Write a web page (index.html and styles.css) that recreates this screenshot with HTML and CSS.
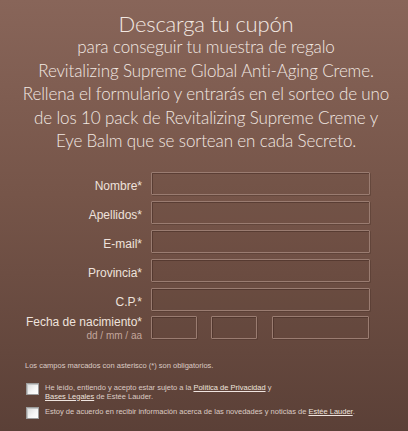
FILE: index.html
```html
<!DOCTYPE html>
<html lang="es">
<head>
<meta charset="utf-8">
<link rel="stylesheet" href="styles.css">
</head>
<body>
<div class="page">
  <div class="intro">
    <h1 class="title">Descarga tu cupón</h1>
    <p class="lead">para conseguir tu muestra de regalo<br>Revitalizing Supreme Global Anti-Aging Creme.<br>Rellena el formulario y entrarás en el sorteo de uno<br>de los 10 pack de Revitalizing Supreme Creme y<br>Eye Balm que se sortean en cada Secreto.</p>
  </div>
  <form class="form">
    <div class="row"><label class="label">Nombre*</label><input class="field" type="text"></div>
    <div class="row"><label class="label">Apellidos*</label><input class="field" type="text"></div>
    <div class="row"><label class="label">E-mail*</label><input class="field" type="text"></div>
    <div class="row"><label class="label">Provincia*</label><input class="field" type="text"></div>
    <div class="row"><label class="label">C.P.*</label><input class="field" type="text"></div>
    <div class="row date-row">
      <label class="label label-date">Fecha de nacimiento*<span class="hint">dd / mm / aa</span></label>
      <div class="date-fields">
        <input class="field dd" type="text">
        <input class="field mm" type="text">
        <input class="field aa" type="text">
      </div>
    </div>
  </form>
  <div class="legal">
    <p class="note">Los campos marcados con asterisco (*) son obligatorios.</p>
    <div class="check">
      <span class="box"></span>
      <p class="check-text">He leído, entiendo y acepto estar sujeto a la <a href="#">Política de Privacidad</a> y<br><a href="#">Bases Legales</a> de Estée Lauder.</p>
    </div>
    <div class="check">
      <span class="box"></span>
      <p class="check-text">Estoy de acuerdo en recibir información acerca de las novedades y noticias de <a href="#">Estée Lauder</a>.</p>
    </div>
  </div>
</div>
</body>
</html>
```

FILE: styles.css
```css
html, body {
  margin: 0;
  padding: 0;
}
body {
  width: 408px;
  height: 431px;
  overflow: hidden;
  background: linear-gradient(180deg, #886559 0%, #765549 45%, #5b4037 100%);
  font-family: "Liberation Sans", Arial, sans-serif;
}
.page {
  width: 408px;
}
.intro {
  text-align: center;
  color: #f2e8e2;
  font-family: "Lato", "Open Sans", sans-serif;
  padding-top: 13px;
  padding-left: 4px;
}
.title {
  margin: 0;
  font-weight: 300;
  font-size: 22px;
  line-height: 22px;
  letter-spacing: -0.2px;
}
.lead {
  margin: 0;
  font-size: 17px;
  line-height: 23.5px;
  font-weight: 300;
  letter-spacing: -0.13px;
}
.form {
  margin-top: 19px;
  display: flex;
  flex-direction: column;
  gap: 6px;
}
.row {
  display: grid;
  grid-template-columns: 142px 219px;
  column-gap: 9px;
  align-items: end;
}
.label {
  text-align: right;
  color: #eee2dc;
  font-size: 12px;
  line-height: 14px;
  padding-bottom: 2px;
}
.field {
  box-sizing: border-box;
  height: 23px;
  margin: 0;
  padding: 0 4px;
  background: rgba(90, 60, 50, 0.08);
  border: 1px solid #9a7c71;
  box-shadow: inset 1px 1px 0 rgba(60, 35, 28, 0.45), 1px 1px 0 rgba(70, 45, 38, 0.35);
  border-radius: 1px;
  outline: none;
  width: 100%;
}
.date-row {
  align-items: start;
  margin-top: -1px;
}
.label-date {
  display: flex;
  flex-direction: column;
  padding-top: 0;
  padding-bottom: 0;
  line-height: 13px;
}
.hint {
  font-size: 10px;
  color: #c2a69c;
  line-height: 13px;
}
.date-fields {
  display: flex;
}
.dd, .mm {
  width: 46px;
}
.dd {
  margin-right: 14px;
}
.mm {
  margin-right: 15px;
}
.aa {
  width: 97px;
}
.legal {
  padding-left: 25px;
  color: #dccbc4;
  font-size: 7.5px;
}
.note {
  margin: 19px 0 0;
  line-height: 10px;
}
.check {
  display: flex;
  align-items: flex-start;
  gap: 6px;
  margin-top: 12px;
}
.check + .check {
  margin-top: 6px;
}
.box {
  flex: none;
  box-sizing: border-box;
  width: 13px;
  height: 12px;
  margin-left: 1px;
  border: 1px solid #9c9c9c;
  background: linear-gradient(135deg, #d8dada 0%, #f6f6f6 60%, #ffffff 100%);
  box-shadow: inset 1px 1px 0 #c4c6c6;
}
.check-text {
  margin: 0;
  line-height: 9px;
  padding-top: 0;
}
.check-text a {
  color: #efe4df;
  text-decoration: underline;
}
```
